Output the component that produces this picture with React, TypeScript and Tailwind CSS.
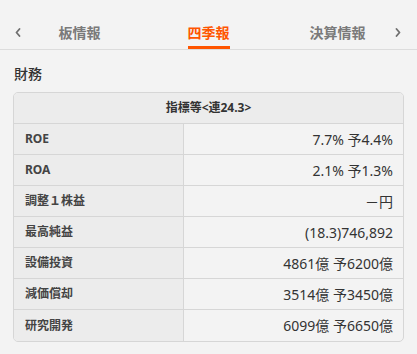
import React from "react";

const rows: [string, string][] = [
  ["ROE", "7.7% 予4.4%"],
  ["ROA", "2.1% 予1.3%"],
  ["調整１株益", "－円"],
  ["最高純益", "(18.3)746,892"],
  ["設備投資", "4861億 予6200億"],
  ["減価償却", "3514億 予3450億"],
  ["研究開発", "6099億 予6650億"],
];

function Chevron({ dir }: { dir: "l" | "r" }) {
  return (
    <svg width="6" height="9" viewBox="0 0 6 9" fill="none">
      {dir === "l" ? (
        <path d="M4.5 1 L1.5 4.5 L4.5 8" stroke="#6f6f6f" strokeWidth="1.8" strokeLinecap="round" strokeLinejoin="round" />
      ) : (
        <path d="M1.5 1 L4.5 4.5 L1.5 8" stroke="#6f6f6f" strokeWidth="1.8" strokeLinecap="round" strokeLinejoin="round" />
      )}
    </svg>
  );
}

export default function App() {
  return (
    <div
      className="w-[417px] h-[354px] bg-[#f3f3f3] overflow-hidden"
      style={{ fontFamily: '"Noto Sans", "Noto Sans CJK JP", sans-serif' }}
    >
      <div className="relative h-[50px] border-b border-[#dcdcdc] px-[15px] grid grid-cols-3">
        <div className="absolute left-[15px] top-[28px]">
          <Chevron dir="l" />
        </div>
        <div className="absolute left-[395px] top-[28px]">
          <Chevron dir="r" />
        </div>
        <div className="flex items-end justify-center">
          <span className="text-[14px] leading-[20px] font-bold text-[#7a7a7a] pb-[3px] border-b-[3px] border-transparent">
            板情報
          </span>
        </div>
        <div className="flex items-end justify-center">
          <span className="text-[14px] leading-[20px] font-bold text-[#ff5500] pb-[3px] border-b-[3px] border-[#ff5500]">
            四季報
          </span>
        </div>
        <div className="flex items-end justify-center">
          <span className="text-[14px] leading-[20px] font-bold text-[#7a7a7a] pb-[3px] border-b-[3px] border-transparent">
            決算情報
          </span>
        </div>
      </div>
      <div className="px-[13px] pt-[14px]">
        <div className="text-[14px] leading-[20px] font-medium text-[#333] pl-[1px] mb-[8px]">財務</div>
        <div className="border border-[#d6d6d6] rounded-[5px] overflow-hidden bg-[#f3f3f3]">
          <div className="h-[31px] bg-[#ececec] border-b border-[#d6d6d6] flex items-center justify-center text-[12px] font-bold text-[#333]">
            指標等&lt;連24.3&gt;
          </div>
          {rows.map(([k, v], i) => (
            <div
              key={k}
              className={`grid grid-cols-[170px_1fr] h-[31px] ${i < rows.length - 1 ? "border-b border-[#d6d6d6]" : ""}`}
            >
              <div className="bg-[#ececec] border-r border-[#d6d6d6] flex items-center pl-[11px] text-[12px] font-bold text-[#444]">
                {k}
              </div>
              <div className="flex items-center justify-end pr-[10px] text-[14px] text-[#333]">{v}</div>
            </div>
          ))}
        </div>
      </div>
    </div>
  );
}
